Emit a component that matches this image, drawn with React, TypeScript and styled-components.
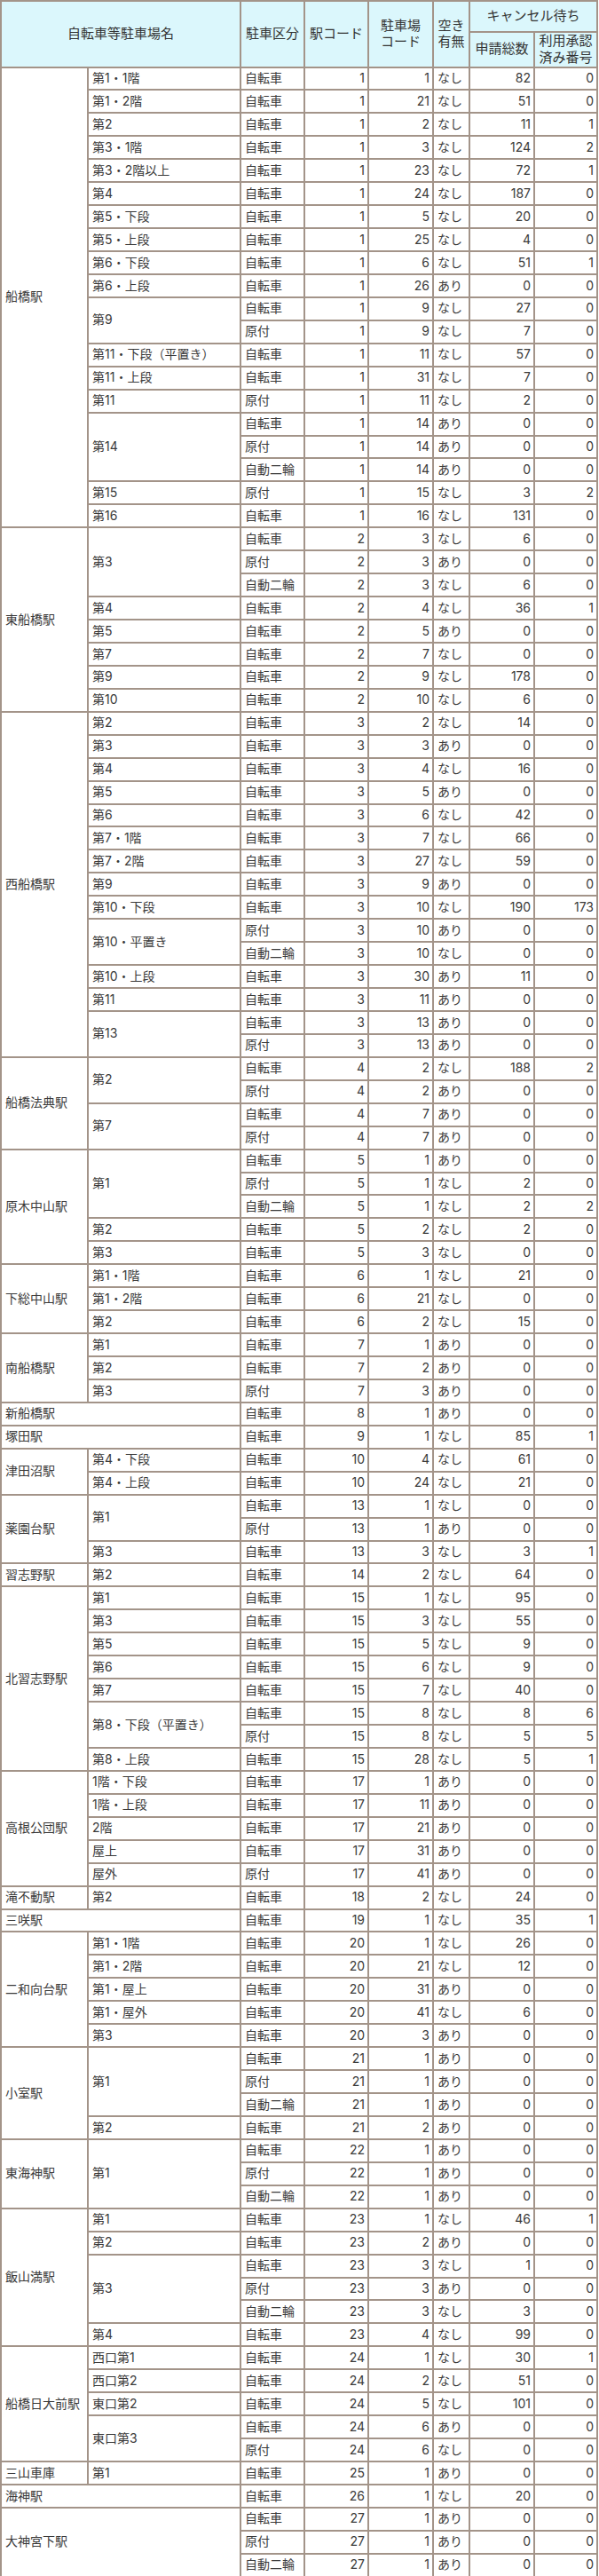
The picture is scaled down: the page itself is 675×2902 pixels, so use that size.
import React from 'react'
import styled, { createGlobalStyle } from 'styled-components'

const GlobalStyle = createGlobalStyle`
  html, body {
    margin: 0;
    padding: 0;
    background: #ffffff;
  }
  body {
    font-family: Inter, "Noto Sans CJK JP", sans-serif;
    color: #3a3a3a;
  }
`

const LINE = '#a39489'

const Table = styled.table`
  border-collapse: separate;
  border-spacing: 0;
  table-layout: fixed;
  width: 674px;
  border-top: 2px solid ${LINE};
  border-left: 2px solid ${LINE};
  font-size: 14px;
`

const Col = styled.col<{ $w: number }>`
  width: ${({ $w }) => $w}px;
`

const HeadCell = styled.th<{ $h: number }>`
  box-sizing: border-box;
  height: ${({ $h }) => $h}px;
  background: #dbf7fc;
  border-right: 2px solid ${LINE};
  border-bottom: 2px solid ${LINE};
  font-weight: normal;
  font-size: 15px;
  line-height: 1.25;
  color: #333;
  text-align: center;
  vertical-align: middle;
  padding: 0 1px;
`

const Cell = styled.td<{ $num?: boolean }>`
  box-sizing: border-box;
  height: 25.94px;
  border-right: 2px solid ${LINE};
  border-bottom: 2px solid ${LINE};
  padding: 0 ${({ $num }) => ($num ? '3px' : '4px')};
  text-align: ${({ $num }) => ($num ? 'right' : 'left')};
  vertical-align: middle;
  line-height: 1.2;
  white-space: nowrap;
`

type Lot = [string | null, string]
type Station = [string, number, Lot[]]

// 駐車区分 駐車場コード 空き有無 申請総数 利用承認済み番号 ("|" で行を区切る)
const DATA: Station[] = [
  ['船橋駅', 1, [
    ['第1・1階', '自転車 1 なし 82 0'],
    ['第1・2階', '自転車 21 なし 51 0'],
    ['第2', '自転車 2 なし 11 1'],
    ['第3・1階', '自転車 3 なし 124 2'],
    ['第3・2階以上', '自転車 23 なし 72 1'],
    ['第4', '自転車 24 なし 187 0'],
    ['第5・下段', '自転車 5 なし 20 0'],
    ['第5・上段', '自転車 25 なし 4 0'],
    ['第6・下段', '自転車 6 なし 51 1'],
    ['第6・上段', '自転車 26 あり 0 0'],
    ['第9', '自転車 9 なし 27 0|原付 9 なし 7 0'],
    ['第11・下段（平置き）', '自転車 11 なし 57 0'],
    ['第11・上段', '自転車 31 なし 7 0'],
    ['第11', '原付 11 なし 2 0'],
    ['第14', '自転車 14 あり 0 0|原付 14 あり 0 0|自動二輪 14 あり 0 0'],
    ['第15', '原付 15 なし 3 2'],
    ['第16', '自転車 16 なし 131 0'],
  ]],
  ['東船橋駅', 2, [
    ['第3', '自転車 3 なし 6 0|原付 3 あり 0 0|自動二輪 3 なし 6 0'],
    ['第4', '自転車 4 なし 36 1'],
    ['第5', '自転車 5 あり 0 0'],
    ['第7', '自転車 7 なし 0 0'],
    ['第9', '自転車 9 なし 178 0'],
    ['第10', '自転車 10 なし 6 0'],
  ]],
  ['西船橋駅', 3, [
    ['第2', '自転車 2 なし 14 0'],
    ['第3', '自転車 3 あり 0 0'],
    ['第4', '自転車 4 なし 16 0'],
    ['第5', '自転車 5 あり 0 0'],
    ['第6', '自転車 6 なし 42 0'],
    ['第7・1階', '自転車 7 なし 66 0'],
    ['第7・2階', '自転車 27 なし 59 0'],
    ['第9', '自転車 9 あり 0 0'],
    ['第10・下段', '自転車 10 なし 190 173'],
    ['第10・平置き', '原付 10 あり 0 0|自動二輪 10 なし 0 0'],
    ['第10・上段', '自転車 30 あり 11 0'],
    ['第11', '自転車 11 あり 0 0'],
    ['第13', '自転車 13 あり 0 0|原付 13 あり 0 0'],
  ]],
  ['船橋法典駅', 4, [
    ['第2', '自転車 2 なし 188 2|原付 2 あり 0 0'],
    ['第7', '自転車 7 あり 0 0|原付 7 あり 0 0'],
  ]],
  ['原木中山駅', 5, [
    ['第1', '自転車 1 あり 0 0|原付 1 なし 2 0|自動二輪 1 なし 2 2'],
    ['第2', '自転車 2 なし 2 0'],
    ['第3', '自転車 3 なし 0 0'],
  ]],
  ['下総中山駅', 6, [
    ['第1・1階', '自転車 1 なし 21 0'],
    ['第1・2階', '自転車 21 なし 0 0'],
    ['第2', '自転車 2 なし 15 0'],
  ]],
  ['南船橋駅', 7, [
    ['第1', '自転車 1 あり 0 0'],
    ['第2', '自転車 2 あり 0 0'],
    ['第3', '原付 3 あり 0 0'],
  ]],
  ['新船橋駅', 8, [[null, '自転車 1 あり 0 0']]],
  ['塚田駅', 9, [[null, '自転車 1 なし 85 1']]],
  ['津田沼駅', 10, [
    ['第4・下段', '自転車 4 なし 61 0'],
    ['第4・上段', '自転車 24 なし 21 0'],
  ]],
  ['薬園台駅', 13, [
    ['第1', '自転車 1 なし 0 0|原付 1 あり 0 0'],
    ['第3', '自転車 3 なし 3 1'],
  ]],
  ['習志野駅', 14, [['第2', '自転車 2 なし 64 0']]],
  ['北習志野駅', 15, [
    ['第1', '自転車 1 なし 95 0'],
    ['第3', '自転車 3 なし 55 0'],
    ['第5', '自転車 5 なし 9 0'],
    ['第6', '自転車 6 なし 9 0'],
    ['第7', '自転車 7 なし 40 0'],
    ['第8・下段（平置き）', '自転車 8 なし 8 6|原付 8 なし 5 5'],
    ['第8・上段', '自転車 28 なし 5 1'],
  ]],
  ['高根公団駅', 17, [
    ['1階・下段', '自転車 1 あり 0 0'],
    ['1階・上段', '自転車 11 あり 0 0'],
    ['2階', '自転車 21 あり 0 0'],
    ['屋上', '自転車 31 あり 0 0'],
    ['屋外', '原付 41 あり 0 0'],
  ]],
  ['滝不動駅', 18, [['第2', '自転車 2 なし 24 0']]],
  ['三咲駅', 19, [[null, '自転車 1 なし 35 1']]],
  ['二和向台駅', 20, [
    ['第1・1階', '自転車 1 なし 26 0'],
    ['第1・2階', '自転車 21 なし 12 0'],
    ['第1・屋上', '自転車 31 あり 0 0'],
    ['第1・屋外', '自転車 41 なし 6 0'],
    ['第3', '自転車 3 あり 0 0'],
  ]],
  ['小室駅', 21, [
    ['第1', '自転車 1 あり 0 0|原付 1 あり 0 0|自動二輪 1 あり 0 0'],
    ['第2', '自転車 2 あり 0 0'],
  ]],
  ['東海神駅', 22, [
    ['第1', '自転車 1 あり 0 0|原付 1 あり 0 0|自動二輪 1 あり 0 0'],
  ]],
  ['飯山満駅', 23, [
    ['第1', '自転車 1 なし 46 1'],
    ['第2', '自転車 2 あり 0 0'],
    ['第3', '自転車 3 なし 1 0|原付 3 あり 0 0|自動二輪 3 なし 3 0'],
    ['第4', '自転車 4 なし 99 0'],
  ]],
  ['船橋日大前駅', 24, [
    ['西口第1', '自転車 1 なし 30 1'],
    ['西口第2', '自転車 2 なし 51 0'],
    ['東口第2', '自転車 5 なし 101 0'],
    ['東口第3', '自転車 6 あり 0 0|原付 6 なし 0 0'],
  ]],
  ['三山車庫', 25, [['第1', '自転車 1 あり 0 0']]],
  ['海神駅', 26, [[null, '自転車 1 なし 20 0']]],
  ['大神宮下駅', 27, [[null, '自転車 1 あり 0 0|原付 1 あり 0 0|自動二輪 1 あり 0 0']]],
]

const WIDTHS = [98, 172, 72, 72, 73, 41, 73, 71]

function StationRows({ station }: { station: Station }) {
  const [name, code, lots] = station
  const parsed = lots.map(([lotName, text]) => ({
    lotName,
    rows: text.split('|').map((r) => r.split(' ')),
  }))
  const total = parsed.reduce((n, l) => n + l.rows.length, 0)

  return (
    <>
      {parsed.map((lot, li) =>
        lot.rows.map(([kind, lotCode, aki, apply, approved], ri) => (
          <tr key={`${li}-${ri}`}>
            {li === 0 && ri === 0 && (
              <Cell rowSpan={total} colSpan={lot.lotName === null ? 2 : 1}>
                {name}
              </Cell>
            )}
            {lot.lotName !== null && ri === 0 && (
              <Cell rowSpan={lot.rows.length}>{lot.lotName}</Cell>
            )}
            <Cell>{kind}</Cell>
            <Cell $num>{code}</Cell>
            <Cell $num>{lotCode}</Cell>
            <Cell>{aki}</Cell>
            <Cell $num>{apply}</Cell>
            <Cell $num>{approved}</Cell>
          </tr>
        ))
      )}
    </>
  )
}

export default function App() {
  return (
    <>
      <GlobalStyle />
      <Table>
        <colgroup>
          {WIDTHS.map((w, i) => (
            <Col key={i} $w={w} />
          ))}
        </colgroup>
        <thead>
          <tr>
            <HeadCell $h={35} colSpan={2} rowSpan={2}>自転車等駐車場名</HeadCell>
            <HeadCell $h={35} rowSpan={2}>駐車区分</HeadCell>
            <HeadCell $h={35} rowSpan={2}>駅コード</HeadCell>
            <HeadCell $h={35} rowSpan={2}>
              駐車場
              <br />
              コード
            </HeadCell>
            <HeadCell $h={35} rowSpan={2}>
              空き
              <br />
              有無
            </HeadCell>
            <HeadCell $h={35} colSpan={2}>キャンセル待ち</HeadCell>
          </tr>
          <tr>
            <HeadCell $h={36}>申請総数</HeadCell>
            <HeadCell $h={36}>
              利用承認
              <br />
              済み番号
            </HeadCell>
          </tr>
        </thead>
        <tbody>
          {DATA.map((s) => (
            <StationRows key={s[0]} station={s} />
          ))}
        </tbody>
      </Table>
    </>
  )
}
